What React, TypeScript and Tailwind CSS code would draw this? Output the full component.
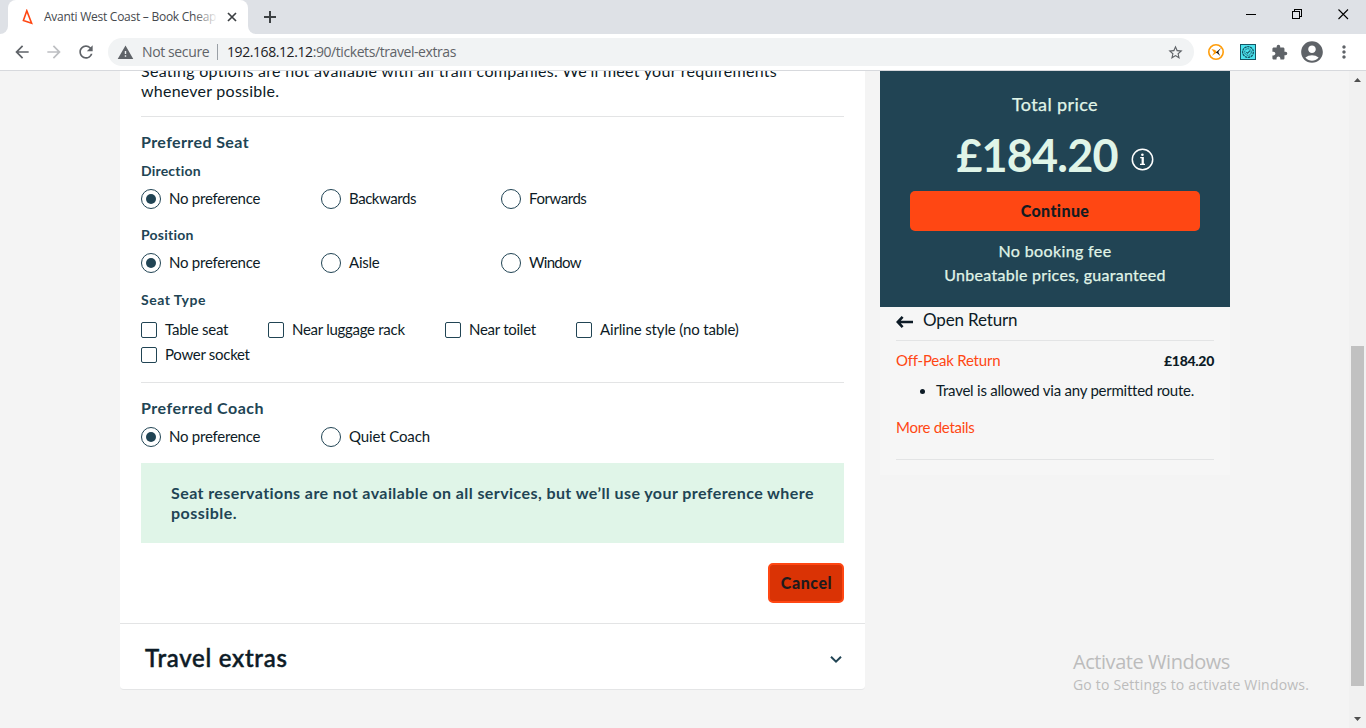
import React from "react";
import { MdStarBorder, MdExtension, MdAccountCircle, MdMoreVert, MdRefresh, MdArrowBack, MdArrowForward, MdWarning } from "react-icons/md";

function Radio({ label, checked = false, track }: { label: string; checked?: boolean; track: string }) {
  return (
    <label className="flex h-5 w-[180px] items-center gap-2 text-[15px] leading-5">
      <span className="flex size-5 shrink-0 items-center justify-center rounded-full border border-[#214454] bg-white">
        {checked && <span className="size-2.5 rounded-full bg-[#214454]" />}
      </span>
      <span className={`pb-0.5 whitespace-nowrap ${track}`}>{label}</span>
    </label>
  );
}

function Check({ label, width, track }: { label: string; width: string; track: string }) {
  return (
    <label className={`flex h-[25px] items-center gap-2 text-[15px] leading-5 ${width}`}>
      <span className="size-4 shrink-0 rounded-[2px] border border-[#214454] bg-white" />
      <span className={`pb-0.5 whitespace-nowrap ${track}`}>{label}</span>
    </label>
  );
}

function BrowserChrome() {
  return (
    <header className="h-[71px] shrink-0 border-b border-[#d7d9dd] bg-white font-['Open_Sans',sans-serif]">
      <div className="flex h-[34px] bg-[#dee1e6]">
        <div className="flex w-2 items-end bg-white">
          <div className="h-full w-2 rounded-br-lg bg-[#dee1e6]" />
        </div>
        <div className="flex w-60 items-center rounded-t-lg bg-white">
          <svg className="ml-[14px] h-4 w-3 shrink-0" viewBox="0 0 12 16" fill="none" stroke="#ff4713" strokeWidth="1.6" strokeLinejoin="miter">
            <path d="M4.8 1.8 L1.4 11.4 L9.6 14.2 Z" />
          </svg>
          <div className="relative ml-[10px] w-[174px] overflow-hidden whitespace-nowrap text-xs tracking-[-0.26px] text-[#45494d]">
            Avanti West Coast – Book Cheap
            <div className="absolute inset-y-0 right-0 w-6 bg-gradient-to-r from-transparent to-white" />
          </div>
          <svg className="ml-[9px] size-[10px]" viewBox="0 0 10 10" stroke="#3c4043" strokeWidth="1.7">
            <path d="M1 1 L9 9 M9 1 L1 9" />
          </svg>
        </div>
        <div className="flex w-2 bg-white">
          <div className="h-full w-2 rounded-bl-lg bg-[#dee1e6]" />
        </div>
        <svg className="mt-[11px] ml-2 size-3" viewBox="0 0 12 12" stroke="#3c4043" strokeWidth="2">
          <path d="M6 0 V12 M0 6 H12" />
        </svg>
        <div className="ml-auto flex items-start pr-[17px] text-black">
          <svg className="mt-[9px] h-[11px] w-[11px]" viewBox="0 0 11 11" stroke="currentColor" shapeRendering="crispEdges">
            <path d="M0 5.5 H10" />
          </svg>
          <svg className="mt-[9px] ml-[35px] h-[11px] w-[11px]" viewBox="0 0 11 11" fill="none" stroke="currentColor" shapeRendering="crispEdges">
            <path d="M0.5 2.5 H7.5 V9.5 H0.5 Z M2.5 2.5 V0.5 H9.5 V7.5 H7.5" />
          </svg>
          <svg className="mt-[9px] ml-[35px] h-[11px] w-[11px]" viewBox="0 0 11 11" stroke="currentColor" strokeWidth="1.1">
            <path d="M0.5 0.5 L10 10 M10 0.5 L0.5 10" />
          </svg>
        </div>
      </div>
      <div className="flex h-9 items-center text-[#5f6368]">
        <MdArrowBack className="ml-3 size-5" />
        <MdArrowForward className="ml-3 size-5 text-[#bdbfc2]" />
        <MdRefresh className="ml-3 size-5" />
        <div className="ml-3 flex h-7 w-[1086px] items-center rounded-full bg-[#f1f3f4] pr-[10px] pl-[9px] text-sm">
          <MdWarning className="size-[17px]" />
          <span className="ml-2 w-[67px] whitespace-nowrap tracking-[-0.38px]">Not secure</span>
          <span className="ml-2 h-4 w-px bg-[#9aa0a6]" />
          <span className="ml-[9px] whitespace-nowrap tracking-[-0.42px]">
            <span className="text-[#202124]">192.168.12.12</span>:90/tickets/travel-extras
          </span>
          <MdStarBorder className="ml-auto size-[17px]" />
        </div>
        <svg className="ml-[13px] size-[18px]" viewBox="0 0 18 18">
          <circle cx="9" cy="9" r="7.2" fill="#fff" stroke="#ff9d0a" strokeWidth="1.6" />
          <path d="M4.5 6 L8.2 7 L10 9.5 L5 12.8 L7 9.5 Z" fill="#ff9d0a" />
          <path d="M14 5 L8.8 9.6 L10.5 10.5 L13.2 13 L11.3 9 Z" fill="#161616" />
        </svg>
        <svg className="ml-[15px] size-4" viewBox="0 0 16 16" fill="none" stroke="#155665">
          <rect x="0.5" y="0.5" width="15" height="15" fill="#4ce3ee" />
          <circle cx="8" cy="8" r="5.4" strokeWidth="1.3" strokeDasharray="2.4 0.6" />
          <circle cx="8" cy="8" r="3.3" strokeWidth="0.9" strokeDasharray="1.8 0.6" />
          <path d="M6.3 8 L7.5 9.3 L10 6.6" strokeWidth="1.1" />
        </svg>
        <MdExtension className="ml-[15px] size-[17px]" />
        <MdAccountCircle className="ml-[11px] size-[26px]" />
        <MdMoreVert className="ml-[9px] size-5" />
      </div>
    </header>
  );
}

function SeatingPanel() {
  return (
    <main className="h-[619px] w-[745px] shrink-0 rounded-b-[4px] border-b border-[#e4e5e6] bg-white">
      <section className="flex h-[553px] flex-col border-b border-[#e3e4e5] px-[21px]">
        <p className="-mt-[10px] h-[55px] text-base leading-5">
          <span className="whitespace-nowrap tracking-[0.29px]">
            Seating options are not available with all train companies. We’ll meet your requirements
          </span>
          <br />
          <span className="tracking-[0.24px]">whenever possible.</span>
        </p>
        <hr className="border-[#e3e4e5]" />
        <h2 className="mt-[15px] text-base leading-5 font-bold tracking-[0.4px] text-[#214454]">Preferred Seat</h2>
        <h3 className="mt-[9px] text-sm leading-5 font-bold tracking-[0.19px] text-[#214454]">Direction</h3>
        <div className="mt-2 flex">
          <Radio label="No preference" checked track="tracking-[-0.24px]" />
          <Radio label="Backwards" track="tracking-[-0.45px]" />
          <Radio label="Forwards" track="tracking-[-0.45px]" />
        </div>
        <h3 className="mt-4 text-sm leading-5 font-bold tracking-[0.24px] text-[#214454]">Position</h3>
        <div className="mt-2 flex">
          <Radio label="No preference" checked track="tracking-[-0.24px]" />
          <Radio label="Aisle" track="tracking-[-0.23px]" />
          <Radio label="Window" track="tracking-[-0.7px]" />
        </div>
        <h3 className="mt-[17px] text-sm leading-5 font-bold tracking-[0.5px] text-[#214454]">Seat Type</h3>
        <div className="mt-[7px] flex flex-wrap">
          <Check label="Table seat" width="w-[127px]" track="tracking-[-0.22px]" />
          <Check label="Near luggage rack" width="w-[177px]" track="tracking-[-0.28px]" />
          <Check label="Near toilet" width="w-[131px]" track="tracking-[-0.27px]" />
          <Check label="Airline style (no table)" width="w-[200px]" track="tracking-[-0.15px]" />
          <Check label="Power socket" width="w-[127px]" track="tracking-[-0.29px]" />
        </div>
        <hr className="mt-[15px] border-[#e3e4e5]" />
        <h2 className="mt-[15px] text-base leading-5 font-bold tracking-[0.49px] text-[#214454]">Preferred Coach</h2>
        <div className="mt-[9px] flex">
          <Radio label="No preference" checked track="tracking-[-0.24px]" />
          <Radio label="Quiet Coach" track="tracking-[-0.12px]" />
        </div>
        <div className="mt-4 h-20 bg-[#e0f5e8] px-[30px] pt-5 text-base leading-5 font-bold whitespace-nowrap text-[#214454]">
          <span className="tracking-[0.415px]">
            Seat reservations are not available on all services, but we’ll use your preference where
          </span>
          <br />
          <span className="tracking-[0.46px]">possible.</span>
        </div>
        <button className="mt-5 ml-auto flex h-10 w-[76px] items-center justify-center rounded-[5px] border-2 border-[#ff4713] bg-[#da3305] pl-px text-base font-black tracking-[0.55px] text-[#1f1a1c]">
          Cancel
        </button>
      </section>
      <section className="flex h-[65px] items-center justify-between pt-[5px] pr-[23px] pl-[25px]">
        <h1 className="pb-[3px] text-2xl leading-8 font-medium tracking-[0.74px] [-webkit-text-stroke:0.5px_#0d1b26]">
          Travel extras
        </h1>
        <svg className="h-[7px] w-3" viewBox="0 0 12 7" fill="none" stroke="#214454" strokeWidth="2">
          <path d="M1 0.8 L6 5.6 L11 0.8" />
        </svg>
      </section>
    </main>
  );
}

function PriceSidebar() {
  return (
    <aside className="ml-[15px] h-[404px] w-[350px] shrink-0 bg-[#f6f6f6]">
      <div className="flex h-[236px] flex-col items-center bg-[#214454] text-[#e0f5e8]">
        <p className="mt-[21px] text-lg leading-6 tracking-[0.4px] [-webkit-text-stroke:0.25px_#e0f5e8]">Total price</p>
        <div className="mt-[13px] flex h-[52px] items-center">
          <span className="pb-px text-[45px] leading-[52px] font-bold tracking-[-0.85px]">£184.20</span>
          <svg className="mt-[9px] ml-[13px] size-[23px]" viewBox="0 0 23 23" fill="none">
            <circle cx="11.5" cy="11.5" r="10.2" stroke="#fff" strokeWidth="1.5" />
            <path d="M9.2 9.6 H12 V16 M9 16.4 H14" stroke="#fff" strokeWidth="1.3" />
            <path d="M11.6 16.4 V9" stroke="#fff" strokeWidth="2" />
            <circle cx="11.4" cy="6.7" r="1.3" fill="#fff" />
          </svg>
        </div>
        <button className="mt-[10px] h-10 w-[290px] rounded-[5px] bg-[#ff4713] text-base font-black tracking-[0.4px] text-[#141b20]">
          Continue
        </button>
        <p className="mt-2 text-base leading-6 tracking-[0.37px] [-webkit-text-stroke:0.25px_#e0f5e8]">No booking fee</p>
        <p className="text-base leading-6 tracking-[0.29px] [-webkit-text-stroke:0.25px_#e0f5e8]">
          Unbeatable prices, guaranteed
        </p>
      </div>
      <div className="px-4">
        <div className="flex h-[34px] items-center border-b border-[#e3e4e5] pb-[6px]">
          <svg className="mt-[2px] h-3 w-[17px]" viewBox="0 0 17 12" fill="none" stroke="#0d1b26" strokeWidth="2.6">
            <path d="M1.5 6 H17 M6.6 0.9 L1.8 6 L6.6 11.1" />
          </svg>
          <span className="ml-[10px] pb-px text-[17px] leading-6 tracking-[-0.15px]">Open Return</span>
        </div>
        <div className="mt-[9px] flex h-[21px] items-center justify-between">
          <span className="pb-px text-[15px] tracking-[-0.22px] text-[#ff4713]">Off-Peak Return</span>
          <span className="text-sm font-black tracking-[-0.29px]">£184.20</span>
        </div>
        <ul className="mt-[10px]">
          <li className="flex h-5 items-center pl-6 text-[15px] tracking-[-0.235px] whitespace-nowrap">
            <span className="mr-[11px] size-[5px] rounded-full bg-[#0d1b26]" />
            <span className="pb-0.5">Travel is allowed via any permitted route.</span>
          </li>
        </ul>
        <div className="mt-4 h-[43px] border-b border-[#e3e4e5] text-[15px] leading-5 tracking-[-0.28px] text-[#ff4713]">
          More details
        </div>
      </div>
    </aside>
  );
}

export default function App() {
  return (
    <div className="relative flex h-[728px] w-[1366px] flex-col overflow-hidden bg-[#f4f4f4] font-['Lato',sans-serif] text-[#0d1b26]">
      <BrowserChrome />
      <div className="flex min-h-0 flex-1 justify-between">
        <div className="flex items-start overflow-hidden pl-[120px]">
          <SeatingPanel />
          <PriceSidebar />
        </div>
        <div className="flex w-[17px] flex-col items-center bg-[#f1f1f1]">
          <svg className="mt-[7px] h-1 w-[7px]" viewBox="0 0 7 4" fill="#505050">
            <path d="M3.5 0 L7 4 H0 Z" />
          </svg>
          <div className="mt-[264px] h-[340px] w-[13px] bg-[#c1c1c1]" />
          <svg className="mt-[31px] h-1 w-[7px]" viewBox="0 0 7 4" fill="#505050">
            <path d="M3.5 4 L0 0 H7 Z" />
          </svg>
        </div>
      </div>
      <div className="absolute top-[649px] left-[1073px] font-['Open_Sans',sans-serif] whitespace-nowrap text-[#bcbcbc]">
        <p className="text-xl leading-[26px] tracking-[-0.45px]">Activate Windows</p>
        <p className="text-sm leading-5 tracking-[0.19px]">Go to Settings to activate Windows.</p>
      </div>
    </div>
  );
}
